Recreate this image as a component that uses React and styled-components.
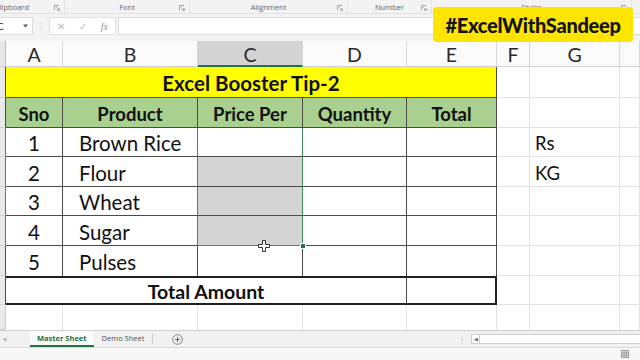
import React from 'react';
import styled, { createGlobalStyle } from 'styled-components';

const Global = createGlobalStyle`
  html, body { margin: 0; padding: 0; width: 640px; height: 360px; overflow: hidden; background: #fff; }
  body { font-family: Lato, "Open Sans", sans-serif; }
  * { box-sizing: border-box; }
`;

const Screen = styled.div`
  position: relative;
  width: 640px;
  height: 360px;
  display: flex;
  flex-direction: column;
  background: #f3f3f3;
  overflow: hidden;
`;

/* ---------- ribbon group labels ---------- */
const GroupBar = styled.div`
  display: flex;
  height: 14px;
  margin-left: -40px;
  border-bottom: 1px solid #e2e2e2;
`;
const Group = styled.div`
  position: relative;
  width: ${p => p.$w}px;
  flex: none;
  display: flex;
  align-items: center;
  justify-content: center;
  font-family: "Open Sans", sans-serif;
  font-size: 7.5px;
  color: #666;
  border-right: 1px solid #e4e4e4;
`;
const Launcher = styled.svg`
  position: absolute;
  right: 4px;
  top: 5px;
`;

/* ---------- formula bar ---------- */
const FormulaRow = styled.div`
  display: flex;
  align-items: center;
  height: 27px;
  padding: 3px 0 6px 0;
`;
const NameBox = styled.div`
  width: 36px;
  height: 18px;
  background: #fff;
  border: 1px solid #dcdcdc;
  border-left: none;
  display: flex;
  align-items: center;
  justify-content: space-between;
  padding: 0 4px 0 0;
  font-size: 10px;
  color: #333;
  margin-left: -3px;
`;
const Dots = styled.div`
  width: 16px;
  text-align: center;
  color: #bbb;
  font-size: 9px;
`;
const IconBox = styled.div`
  width: 67px;
  height: 18px;
  background: #fff;
  border: 1px solid #e0e0e0;
  display: flex;
  align-items: center;
  justify-content: space-around;
  color: #bdbdbd;
  font-size: 10px;
  margin-right: 2px;
`;
const Fx = styled.span`
  font-family: "Liberation Serif", serif;
  font-style: italic;
  color: #999;
  font-size: 10px;
`;
const FormulaInput = styled.div`
  flex: 1;
  height: 18px;
  background: #fff;
  border: 1px solid #dcdcdc;
  border-right: none;
`;

/* ---------- badge ---------- */
const Badge = styled.div`
  position: absolute;
  left: 433px;
  top: 7px;
  width: 200px;
  height: 35px;
  border-radius: 4px;
  background: #fde500;
  display: flex;
  align-items: center;
  justify-content: center;
  font-family: Lato, sans-serif;
  font-weight: 900;
  font-size: 20px;
  letter-spacing: -0.3px;
  color: #141414;
`;

/* ---------- sheet ---------- */
const Sheet = styled.div`
  position: relative;
  display: grid;
  grid-template-columns: 6px 57px 135px 105px 104px 90px 33px 90px 1fr;
  grid-template-rows: 26px 31px 30px 29px 30px 29px 30px 30px 29px 25px;
  background: #fff;
`;

const edge = {
  grid: '1px solid #e3e3e3',
  dark: '1px solid #4a4a4a',
  thick: '2px solid #1f1f1f',
  sel: '1px solid #3f8c60',
  light: '1px solid #c9c9c9',
  none: '0 solid transparent',
};

const Corner = styled.div`
  background: #e6e6e6;
  border-right: 1px solid #bdbdbd;
  border-bottom: 1px solid #cfcfcf;
`;
const RowHead = styled.div`
  background: #e9e9e9;
  border-right: ${p => edge[p.$edge || 'light']};
  border-bottom: 1px solid #d2d2d2;
`;
const ColHead = styled.div`
  display: flex;
  align-items: center;
  justify-content: center;
  padding-top: 2px;
  font-family: Lato, sans-serif;
  font-size: 19.5px;
  color: #2a2a2a;
  background: ${p => (p.$active ? '#d3d3d3' : '#fafafa')};
  border-right: 1px solid #d6d6d6;
  border-bottom: ${p => (p.$active ? '2px solid #217346' : '1px solid #cfcfcf')};
`;
const Cell = styled.div`
  grid-column: span ${p => p.$span || 1};
  display: flex;
  align-items: center;
  justify-content: ${p => (p.$align === 'left' ? 'flex-start' : 'center')};
  padding: 2px 0 0 ${p => p.$pad || 0}px;
  background: ${p => p.$bg || '#fff'};
  border-right: ${p => edge[p.$r || 'grid']};
  border-bottom: ${p => edge[p.$b || 'grid']};
  border-top: ${p => edge[p.$t || 'none']};
  font-family: Lato, sans-serif;
  font-weight: ${p => (p.$bold ? 700 : 400)};
  font-size: ${p => p.$size || 20.5}px;
  color: #111;
  white-space: nowrap;
`;

const FillHandle = styled.div`
  position: absolute;
  left: 300px;
  top: 202px;
  width: 6px;
  height: 6px;
  background: #217346;
  border: 1px solid #fff;
`;
const Cursor = styled.svg`
  position: absolute;
  left: 258px;
  top: 199px;
`;

/* ---------- tabs ---------- */
const TabBar = styled.div`
  height: 18px;
  display: flex;
  align-items: stretch;
  background: #f1f1f1;
  border-top: 1px solid #d0d0d0;
  border-bottom: 1px solid #dadada;
  font-family: "Open Sans", sans-serif;
  font-size: 7.5px;
`;
const Nav = styled.div`
  width: 30px;
  display: flex;
  align-items: center;
  padding-left: 2px;
  color: #bbb;
  font-size: 6px;
`;
const Tab = styled.div`
  display: flex;
  align-items: center;
  padding: 0 ${p => (p.$active ? 7 : 8)}px;
  color: ${p => (p.$active ? '#1e6e42' : '#555')};
  font-weight: ${p => (p.$active ? 700 : 400)};
  background: ${p => (p.$active ? '#fbfbfb' : 'transparent')};
  border-bottom: ${p => (p.$active ? '2px solid #217346' : '2px solid transparent')};
  border-right: ${p => (p.$active ? 'none' : '1px solid #c8c8c8')};
  margin: ${p => (p.$active ? '0' : '3px 0')};
`;
const AddBtn = styled.div`
  display: flex;
  align-items: center;
  margin-left: 19px;
`;
const Spacer = styled.div`
  flex: 1;
`;
const VDots = styled.div`
  display: flex;
  align-items: center;
  color: #aaa;
  font-size: 8px;
  padding-right: 5px;
`;
const Scroll = styled.div`
  width: 169px;
  margin: 3px 0;
  background: #fff;
  border: 1px solid #d0d0d0;
  border-right: none;
  display: flex;
  align-items: center;
`;
const ScrollArrow = styled.div`
  width: 8px;
  height: 100%;
  border-right: 1px solid #d0d0d0;
  display: flex;
  align-items: center;
  justify-content: center;
  color: #666;
  font-size: 5px;
`;
const StatusBar = styled.div`
  flex: 1;
  display: flex;
  justify-content: flex-end;
  align-items: center;
  padding-right: 11px;
  background: #f7f7f7;
`;

const LaunchIcon = () => (
  <Launcher width="6" height="6" viewBox="0 0 6 6">
    <path d="M0.5 5 V0.5 H5" stroke="#8a8a8a" strokeWidth="0.8" fill="none" />
    <path d="M2 2 L5.2 5.2 M3.3 5.3 H5.3 V3.3" stroke="#8a8a8a" strokeWidth="0.8" fill="none" />
  </Launcher>
);

const groups = [
  { w: 105, label: 'Clipboard' },
  { w: 125, label: 'Font' },
  { w: 158, label: 'Alignment' },
  { w: 84, label: 'Number' },
  { w: 200, label: 'Styles' },
];

const cols = ['A', 'B', 'C', 'D', 'E', 'F', 'G', ''];
const items = [
  { n: 1, p: 'Brown Rice', g: 'Rs' },
  { n: 2, p: 'Flour', g: 'KG' },
  { n: 3, p: 'Wheat' },
  { n: 4, p: 'Sugar' },
  { n: 5, p: 'Pulses' },
];

export default function App() {
  return (
    <>
      <Global />
      <Screen>
        <GroupBar>
          {groups.map(g => (
            <Group key={g.label} $w={g.w}>
              {g.label}
              <LaunchIcon />
            </Group>
          ))}
        </GroupBar>

        <FormulaRow>
          <NameBox>
            <span>C</span>
            <svg width="5" height="4" viewBox="0 0 5 4"><path d="M0 0.5 H5 L2.5 3.5Z" fill="#555" /></svg>
          </NameBox>
          <Dots>⋮</Dots>
          <IconBox>
            <span>✕</span>
            <span>✓</span>
            <Fx>fx</Fx>
          </IconBox>
          <FormulaInput />
        </FormulaRow>

        <Sheet>
          <Corner />
          {cols.map((c, i) => (
            <ColHead key={i} $active={c === 'C'}>{c}</ColHead>
          ))}

          <RowHead $edge="dark" />
          <Cell $span={5} $bg="#ffff00" $bold $size={20.5} $r="dark" $b="dark">Excel Booster Tip-2</Cell>
          <Cell />
          <Cell />
          <Cell />

          <RowHead $edge="dark" />
          {['Sno', 'Product', 'Price Per', 'Quantity', 'Total'].map(h => (
            <Cell key={h} $bg="#a9d08e" $bold $size={18.5} $r="dark" $b="dark">{h}</Cell>
          ))}
          <Cell />
          <Cell />
          <Cell />

          {items.map((it, i) => {
            const sel = i < 4;
            return (
              <React.Fragment key={it.n}>
                <RowHead $edge={sel ? 'sel' : 'dark'} />
                <Cell $r="dark" $b={i === 4 ? 'none' : 'dark'}>{it.n}</Cell>
                <Cell $align="left" $pad={16} $r={sel ? 'sel' : 'dark'} $b={i === 4 ? 'none' : 'dark'}>{it.p}</Cell>
                <Cell
                  $bg={i >= 1 && i <= 3 ? '#d4d4d4' : '#fff'}
                  $r={sel ? 'sel' : 'dark'}
                  $b={i === 3 ? 'sel' : i === 4 ? 'none' : 'dark'}
                />
                <Cell $r="dark" $b={i === 4 ? 'none' : 'dark'} />
                <Cell $r="dark" $b={i === 4 ? 'none' : 'dark'} />
                <Cell />
                <Cell $align="left" $pad={5} $size={18.5}>{it.g || ''}</Cell>
                <Cell />
              </React.Fragment>
            );
          })}

          <RowHead $edge="dark" />
          <Cell $span={4} $bold $size={19.5} $t="thick" $b="thick" $r="dark">Total Amount</Cell>
          <Cell $t="thick" $b="thick" $r="thick" />
          <Cell />
          <Cell />
          <Cell />

          <RowHead />
          {cols.map((c, i) => (
            <Cell key={i} $b="none" />
          ))}

          <FillHandle />
          <Cursor width="12" height="12" viewBox="0 0 12 12">
            <path d="M4.5 0.5 H7.5 V4.5 H11.5 V7.5 H7.5 V11.5 H4.5 V7.5 H0.5 V4.5 H4.5 Z" fill="#fff" stroke="#333" strokeWidth="1" />
          </Cursor>
        </Sheet>

        <TabBar>
          <Nav>◀</Nav>
          <Tab $active>Master Sheet</Tab>
          <Tab>Demo Sheet</Tab>
          <AddBtn>
            <svg width="11" height="11" viewBox="0 0 11 11">
              <circle cx="5.5" cy="5.5" r="4.8" fill="none" stroke="#777" strokeWidth="0.9" />
              <path d="M5.5 3 V8 M3 5.5 H8" stroke="#666" strokeWidth="1" />
            </svg>
          </AddBtn>
          <Spacer />
          <VDots>⋮</VDots>
          <Scroll>
            <ScrollArrow>◀</ScrollArrow>
          </Scroll>
        </TabBar>
        <StatusBar>
          <svg width="8" height="8" viewBox="0 0 8 8">
            <path d="M0.5 0.5 H7.5 V7.5 H0.5 Z M0.5 3 H7.5 M0.5 5.3 H7.5 M3 0.5 V7.5 M5.3 0.5 V7.5" stroke="#777" strokeWidth="0.7" fill="none" />
          </svg>
        </StatusBar>

        <Badge>#ExcelWithSandeep</Badge>
      </Screen>
    </>
  );
}
